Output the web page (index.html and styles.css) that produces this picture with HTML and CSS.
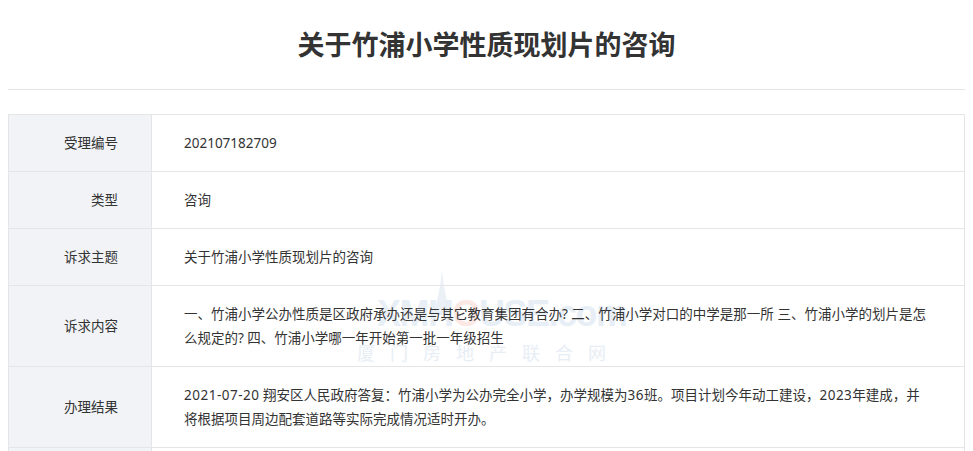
FILE: index.html
```html
<!DOCTYPE html>
<html lang="zh-CN">
<head>
    <meta charset="UTF-8">
    <meta name="viewport" content="width=device-width, initial-scale=1.0">
    <title>关于竹浦小学性质现划片的咨询</title>
    <link rel="stylesheet" href="styles.css">
</head>
<body>
    <div class="page">
        <h1 class="title">关于竹浦小学性质现划片的咨询</h1>

        <div class="detail">
            <!-- site watermark, sits under the text -->
            <div class="watermark">
                <svg class="wm-tower" width="24" height="40" viewBox="0 0 24 40">
                    <path d="M12 0 L13.5 14 L19 40 L5 40 L10.5 14 Z" fill="#eaf0f6"/>
                </svg>
                <div class="wm-logo">XMH<span class="wm-o">O</span>USE.com</div>
                <div class="wm-name">厦门房地产联合网</div>
            </div>

            <table class="detail-table">
                <tr>
                    <th>受理编号</th>
                    <td>202107182709</td>
                </tr>
                <tr>
                    <th>类型</th>
                    <td>咨询</td>
                </tr>
                <tr>
                    <th>诉求主题</th>
                    <td>关于竹浦小学性质现划片的咨询</td>
                </tr>
                <tr>
                    <th>诉求内容</th>
                    <td>一、竹浦小学公办性质是区政府承办还是与其它教育集团有合办? 二、竹浦小学对口的中学是那一所 三、竹浦小学的划片是怎么规定的? 四、竹浦小学哪一年开始第一批一年级招生</td>
                </tr>
                <tr>
                    <th>办理结果</th>
                    <td><span class="num">2021-07-20</span> 翔安区人民政府答复：竹浦小学为公办完全小学，办学规模为<span class="num">36</span>班。项目计划今年动工建设，<span class="num">2023</span>年建成，并将根据项目周边配套道路等实际完成情况适时开办。</td>
                </tr>
                <tr>
                    <th>满意度</th>
                    <td>满意</td>
                </tr>
            </table>
        </div>
    </div>
</body>
</html>
```

FILE: styles.css
```css
body {
    margin: 0;
    font-family: "Noto Sans", "Noto Sans CJK SC", sans-serif;
    color: #333;
    background: #fff;
}
.page {
    padding: 0 8px;
}
.title {
    margin: 0 0 24px;
    padding: 25px 0 24px;
    font-size: 27px;
    line-height: 40px;
    font-weight: bold;
    text-align: center;
    color: #333;
    border-bottom: 1px solid #e5e5e5;
}
.detail {
    position: relative;
}
.detail-table {
    position: relative;
    z-index: 1;
    width: 100%;
    border-collapse: collapse;
    font-size: 13.5px;
    line-height: 24px;
    text-spacing-trim: space-all;
}
.detail-table th,
.detail-table td {
    border: 1px solid #e5e5e5;
    padding: 16px 0;
    vertical-align: middle;
}
.detail-table th {
    width: 109px;
    padding-right: 33px;
    background: #f2f3f7;
    text-align: right;
    font-weight: normal;
    color: #333;
}
.detail-table td {
    padding-left: 32px;
    padding-right: 34px;
    text-align: left;
}
.num {
    letter-spacing: 0.5px;
}
.watermark {
    position: absolute;
    left: 349px;
    top: 180px;
    z-index: 0;
    white-space: nowrap;
    color: #e8eef5;
}
.wm-tower {
    position: absolute;
    left: 73px;
    top: -24px;
}
.wm-logo {
    position: relative;
    padding-left: 20px;
    font-family: "Liberation Sans", sans-serif;
    font-size: 36px;
    font-weight: bold;
    line-height: 40px;
    letter-spacing: -1.5px;
}
.wm-o {
    color: #fbe7e4;
}
.wm-name {
    margin-top: 6px;
    font-family: "Noto Sans CJK SC", sans-serif;
    font-size: 18px;
    line-height: 24px;
    letter-spacing: 15px;
}
```
